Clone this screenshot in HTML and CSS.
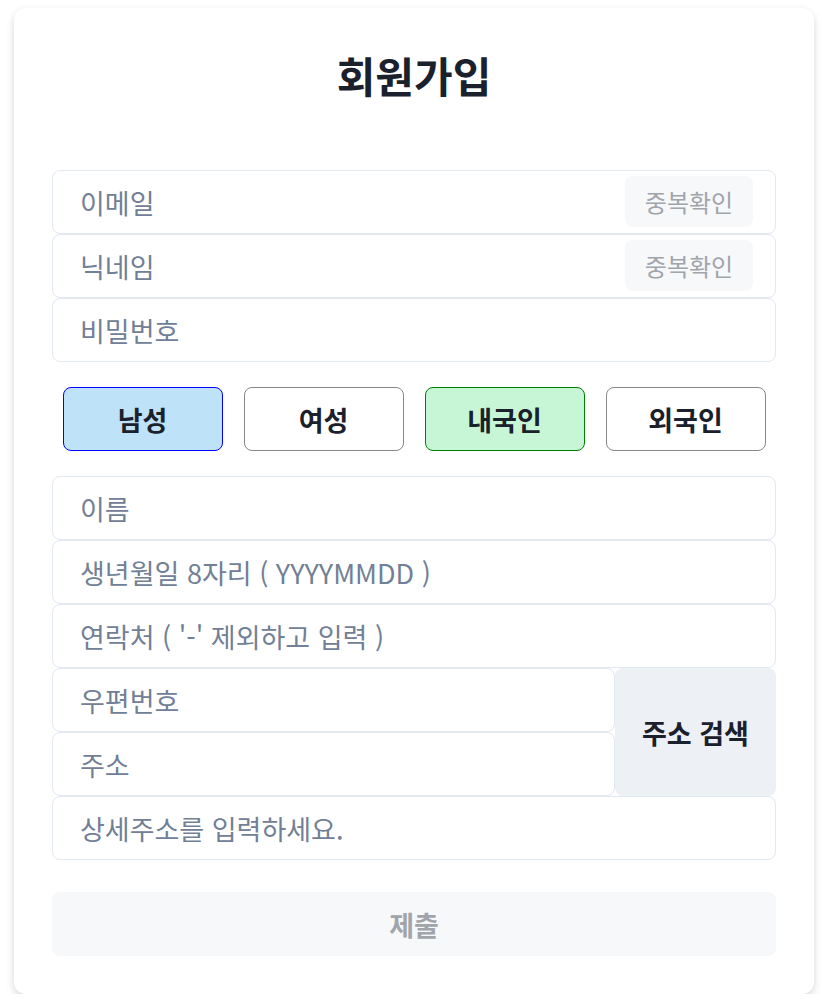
FILE: index.html
```html
<!DOCTYPE html>
<html lang="ko">
<head>
<meta charset="utf-8">
<title>회원가입</title>
<link rel="stylesheet" href="styles.css">
</head>
<body>
<div class="page">
  <div class="card">
    <h1 class="title">회원가입</h1>
    <form class="form">
      <div class="field">
        <input class="input" type="text" placeholder="이메일">
        <button type="button" class="dup">중복확인</button>
      </div>
      <div class="field">
        <input class="input" type="text" placeholder="닉네임">
        <button type="button" class="dup">중복확인</button>
      </div>
      <input class="input" type="password" placeholder="비밀번호">

      <div class="choices">
        <button type="button" class="choice male">남성</button>
        <button type="button" class="choice">여성</button>
        <button type="button" class="choice local">내국인</button>
        <button type="button" class="choice">외국인</button>
      </div>

      <input class="input" type="text" placeholder="이름">
      <input class="input" type="text" placeholder="생년월일 8자리 ( YYYYMMDD )">
      <input class="input" type="text" placeholder="연락처 ( '-' 제외하고 입력 )">
      <div class="addr">
        <input class="input zip" type="text" placeholder="우편번호">
        <input class="input road" type="text" placeholder="주소">
        <button type="button" class="search">주소 검색</button>
      </div>
      <input class="input" type="text" placeholder="상세주소를 입력하세요.">

      <button type="button" class="submit">제출</button>
    </form>
  </div>
</div>
</body>
</html>
```

FILE: styles.css
```css
* { box-sizing: border-box; }
html, body { margin: 0; padding: 0; background: #ffffff; }
body {
  font-family: "Noto Sans CJK KR", "Noto Sans", sans-serif;
  color: #1a202c;
}
.page {
  padding: 8px 18px 0 14px;
}
.card {
  width: 800px;
  background: #ffffff;
  border-radius: 12px;
  box-shadow: 0 5px 10px rgba(0, 0, 0, 0.13), 0 0 6px rgba(0, 0, 0, 0.04);
  padding: 40px 38px 38px;
}
.title {
  margin: 0;
  text-align: center;
  font-size: 42px;
  line-height: 54px;
  font-weight: 700;
  color: #1a202c;
}
.form {
  margin-top: 68px;
  display: flex;
  flex-direction: column;
}
.field { position: relative; }
.input {
  display: block;
  width: 100%;
  height: 64px;
  border: 1px solid #e2e8f0;
  border-radius: 8px;
  padding: 0 27px;
  font-family: inherit;
  font-size: 27px;
  color: #1a202c;
  background: #fff;
  outline: none;
}
.input::placeholder { color: #718096; }
.dup {
  position: absolute;
  right: 23px;
  top: 6px;
  width: 128px;
  height: 51px;
  border: none;
  border-radius: 8px;
  background: #f7f8fa;
  color: #a0a4ab;
  font-family: inherit;
  font-size: 24px;
  padding: 0;
}
.choices {
  display: grid;
  grid-template-columns: repeat(4, 1fr);
  justify-items: center;
  margin: 25px 0 25px;
}
.choice {
  width: 160px;
  height: 64px;
  border: 1px solid #888888;
  border-radius: 8px;
  background: #ffffff;
  font-family: inherit;
  font-size: 27px;
  font-weight: 700;
  color: #1a202c;
  padding: 0;
}
.choice.male { background: #bee3f8; border-color: #0000ff; }
.choice.local { background: #c6f6d5; border-color: #008000; }
.addr {
  display: grid;
  grid-template-columns: 1fr 161px;
  grid-template-rows: 64px 64px;
}
.zip { grid-column: 1; grid-row: 1; }
.road { grid-column: 1; grid-row: 2; }
.search {
  grid-column: 2;
  grid-row: 1 / span 2;
  border: none;
  border-radius: 8px;
  background: #edf1f5;
  font-family: inherit;
  font-size: 27px;
  font-weight: 700;
  color: #1a202c;
  padding: 0;
}
.submit {
  margin-top: 32px;
  height: 64px;
  border: none;
  border-radius: 8px;
  background: #f7f8fa;
  color: #a0a4ab;
  font-family: inherit;
  font-size: 27px;
  font-weight: 700;
  padding: 0;
}
```
